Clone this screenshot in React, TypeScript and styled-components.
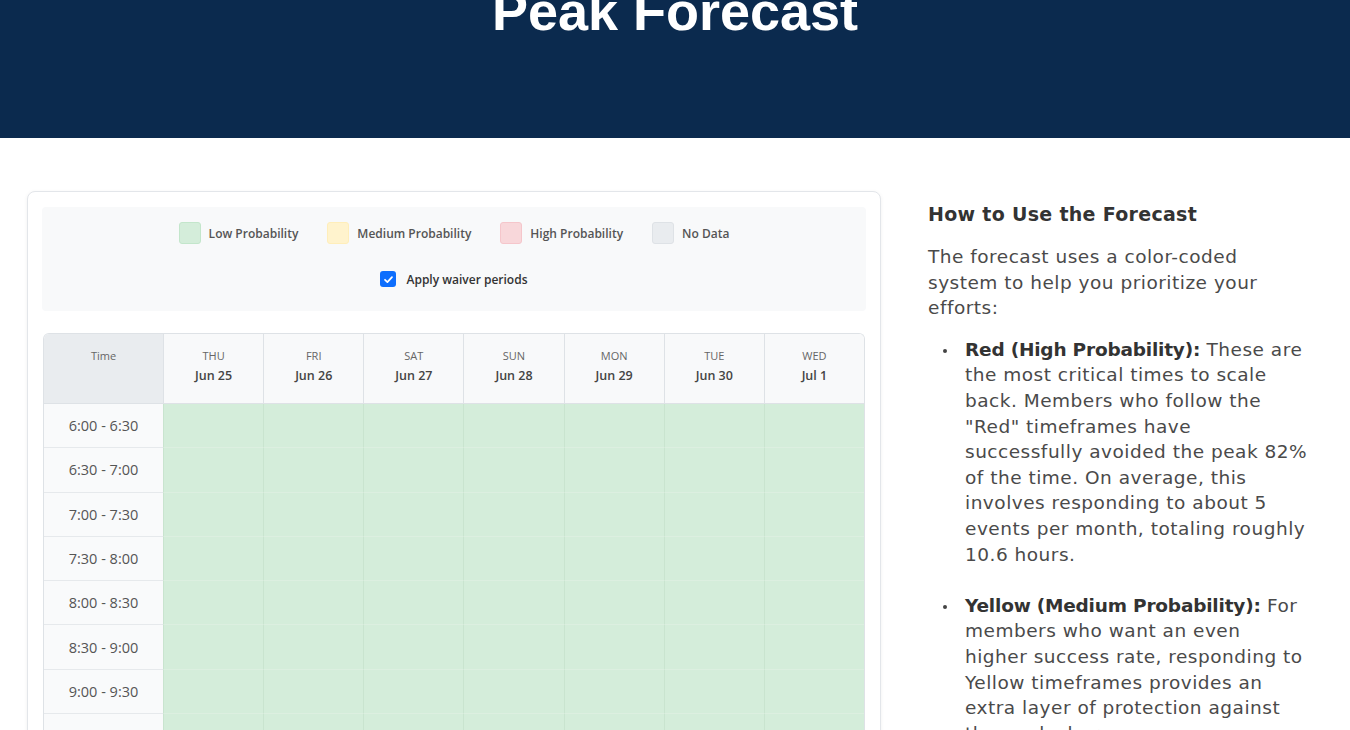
import styled, { createGlobalStyle } from "styled-components";

const GlobalStyle = createGlobalStyle`
  html, body {
    margin: 0;
    padding: 0;
    overflow: hidden;
    background: #ffffff;
  }
  * {
    box-sizing: border-box;
  }
`;

const days = [
  { name: "THU", date: "Jun 25" },
  { name: "FRI", date: "Jun 26" },
  { name: "SAT", date: "Jun 27" },
  { name: "SUN", date: "Jun 28" },
  { name: "MON", date: "Jun 29" },
  { name: "TUE", date: "Jun 30" },
  { name: "WED", date: "Jul 1" },
];

const slots = [
  "6:00 - 6:30",
  "6:30 - 7:00",
  "7:00 - 7:30",
  "7:30 - 8:00",
  "8:00 - 8:30",
  "8:30 - 9:00",
  "9:00 - 9:30",
  "9:30 - 10:00",
  "10:00 - 10:30",
];

const legend = [
  { label: "Low Probability", color: "#d4edda", border: "#c3e6cb" },
  { label: "Medium Probability", color: "#fff3cd", border: "#ffeeba" },
  { label: "High Probability", color: "#f8d7da", border: "#f5c6cb" },
  { label: "No Data", color: "#e9ecef", border: "#dee2e6" },
];

const Header = styled.header`
  height: 138px;
  background: #0b2a4e;
  display: flex;
  justify-content: center;
  overflow: hidden;
`;

const Title = styled.h1`
  margin: -20px 0 0;
  font-family: "Liberation Sans", Arial, sans-serif;
  font-weight: 700;
  font-size: 54px;
  line-height: 62px;
  color: #ffffff;
`;

const Main = styled.main`
  display: grid;
  grid-template-columns: 854px 1fr;
  column-gap: 47px;
  padding: 53px 27px 0;
`;

const Card = styled.section`
  border: 1px solid #e3e6ea;
  border-radius: 8px;
  background: #ffffff;
  box-shadow: 0 1px 4px rgba(0, 0, 0, 0.06);
  padding: 15px 14px 0;
  font-family: "Open Sans", sans-serif;
`;

const LegendBox = styled.div`
  background: #f8f9fa;
  border-radius: 4px;
  padding: 15px 0 24px;
  display: flex;
  flex-direction: column;
  align-items: center;
  gap: 27px;
`;

const LegendRow = styled.div`
  display: flex;
  align-items: center;
  gap: 29px;
`;

const LegendItem = styled.div`
  display: flex;
  align-items: center;
  gap: 8px;
  font-size: 12px;
  font-weight: 600;
  color: #555;
`;

const Swatch = styled.span<{ $color: string; $border: string }>`
  width: 22px;
  height: 22px;
  border-radius: 3px;
  background: ${(p) => p.$color};
  border: 1px solid ${(p) => p.$border};
`;

const CheckRow = styled.label`
  display: flex;
  align-items: center;
  gap: 10px;
  height: 16px;
  font-size: 12px;
  font-weight: 600;
  color: #333;
`;

const CheckBox = styled.span`
  width: 16px;
  height: 16px;
  border-radius: 3px;
  background: #0d6efd;
  display: flex;
  align-items: center;
  justify-content: center;
`;

const TableWrap = styled.div`
  margin: 22px 1px 0;
  border: 1px solid #dee2e6;
  border-bottom: none;
  border-radius: 6px 6px 0 0;
  overflow: hidden;
`;

const Grid = styled.div`
  display: grid;
  grid-template-columns: 119px repeat(7, 1fr);
`;

const HeadCell = styled.div<{ $time?: boolean }>`
  height: 70px;
  padding-top: 14px;
  background: ${(p) => (p.$time ? "#e9ecef" : "#f8f9fa")};
  border-left: ${(p) => (p.$time ? "none" : "1px solid #dee2e6")};
  border-bottom: 1px solid #dee2e6;
  display: flex;
  flex-direction: column;
  align-items: center;
  gap: 4px;
  color: #666;
  font-size: 11px;
`;

const DayDate = styled.span`
  font-size: 12.5px;
  font-weight: 600;
  color: #444;
`;

const TimeCell = styled.div`
  height: 44.3px;
  background: #f9fafb;
  border-bottom: 1px solid #e6e9ec;
  display: flex;
  align-items: center;
  justify-content: center;
  font-size: 14.5px;
  color: #555;
`;

const Slot = styled.div<{ $color: string }>`
  height: 44.3px;
  background: ${(p) => p.$color};
  border-left: 1px solid #c9e4cf;
  border-bottom: 1px solid #dcefe0;
`;

const Side = styled.aside`
  padding-top: 9px;
  padding-right: 15px;
  font-family: "DejaVu Sans", sans-serif;
  color: #4a4a4a;
  font-size: 18.5px;
  letter-spacing: 0.5px;
  line-height: 25.6px;
`;

const SideTitle = styled.h2`
  margin: 0 0 16px;
  font-size: 19px;
  font-weight: 700;
  letter-spacing: 0.3px;
  color: #333;
  line-height: 28px;
`;

const Para = styled.p`
  margin: 0 0 16px;
`;

const List = styled.ul`
  margin: 0;
  padding-left: 37px;
  list-style: none;
`;

const Item = styled.li`
  position: relative;
  margin-bottom: 25.6px;
  &::before {
    content: "";
    position: absolute;
    left: -22px;
    top: 12px;
    width: 4px;
    height: 4px;
    border-radius: 50%;
    background: #444;
  }
  & strong {
    color: #333;
    font-weight: 700;
    letter-spacing: -0.2px;
  }
`;

export default function App() {
  return (
    <>
      <GlobalStyle />
      <Header>
        <Title>Peak Forecast</Title>
      </Header>
      <Main>
        <Card>
          <LegendBox>
            <LegendRow>
              {legend.map((l) => (
                <LegendItem key={l.label}>
                  <Swatch $color={l.color} $border={l.border} />
                  {l.label}
                </LegendItem>
              ))}
            </LegendRow>
            <CheckRow>
              <CheckBox>
                <svg width="11" height="11" viewBox="0 0 12 12">
                  <path
                    d="M2.2 6.3 4.8 8.8 9.8 3.4"
                    fill="none"
                    stroke="#fff"
                    strokeWidth="1.9"
                    strokeLinecap="round"
                    strokeLinejoin="round"
                  />
                </svg>
              </CheckBox>
              Apply waiver periods
            </CheckRow>
          </LegendBox>
          <TableWrap>
            <Grid>
              <HeadCell $time>Time</HeadCell>
              {days.map((d) => (
                <HeadCell key={d.name}>
                  {d.name}
                  <DayDate>{d.date}</DayDate>
                </HeadCell>
              ))}
              {slots.map((s) => (
                <>
                  <TimeCell key={s}>{s}</TimeCell>
                  {days.map((d) => (
                    <Slot key={s + d.name} $color="#d4edda" />
                  ))}
                </>
              ))}
            </Grid>
          </TableWrap>
        </Card>
        <Side>
          <SideTitle>How to Use the Forecast</SideTitle>
          <Para>
            The forecast uses a color-coded system to help you prioritize your
            efforts:
          </Para>
          <List>
            <Item>
              <strong>Red (High Probability):</strong> These are the most
              critical times to scale back. Members who follow the "Red"
              timeframes have successfully avoided the peak 82% of the time. On
              average, this involves responding to about 5 events per month,
              totaling roughly 10.6 hours.
            </Item>
            <Item>
              <strong>Yellow (Medium Probability):</strong> For members who want
              an even higher success rate, responding to Yellow timeframes
              provides an extra layer of protection against the peak charge.
            </Item>
          </List>
        </Side>
      </Main>
    </>
  );
}
